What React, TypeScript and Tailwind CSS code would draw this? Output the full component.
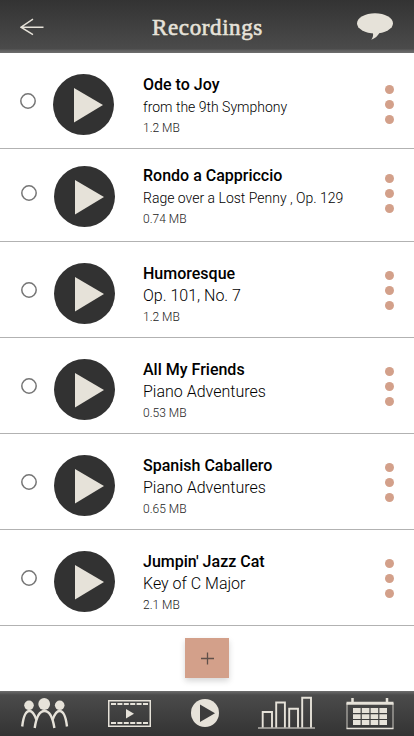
import type { ReactNode } from 'react'

interface Recording {
  title: string
  subtitle: string
  size: string
  compact?: boolean
  smallSubtitle?: boolean
  first?: boolean
}

const RECORDINGS: Recording[] = [
  { title: 'Ode to Joy', subtitle: 'from the 9th Symphony', size: '1.2 MB', smallSubtitle: true, first: true },
  { title: 'Rondo a Cappriccio', subtitle: 'Rage over a Lost Penny , Op. 129', size: '0.74 MB', smallSubtitle: true, compact: true },
  { title: 'Humoresque', subtitle: 'Op. 101, No. 7', size: '1.2 MB' },
  { title: 'All My Friends', subtitle: 'Piano Adventures', size: '0.53 MB' },
  { title: 'Spanish Caballero', subtitle: 'Piano Adventures', size: '0.65 MB' },
  { title: "Jumpin' Jazz Cat", subtitle: 'Key of C Major', size: '2.1 MB' },
]

function Header() {
  return (
    <header className="flex h-[53px] shrink-0 items-center justify-between bg-[linear-gradient(to_bottom,#333_0,#4b4b4b_49px,#5c5c5c_50px,#6e6e6e_53px)] pl-5 pr-[21px]">
      <button aria-label="Back" className="w-9">
        <svg width="24" height="18" viewBox="0 0 24 18" fill="none" stroke="#e6e2d9" strokeWidth="1.4">
          <path d="M13 1.2 1 9.2l12 7.4M1 9.2h22.5" />
        </svg>
      </button>
      <h1 className="pl-0.5 pt-px font-['Liberation_Serif',serif] text-[23px] leading-none tracking-[0.6px] text-[#e6e2d9] [-webkit-text-stroke:0.6px_#e6e2d9]">
        Recordings
      </h1>
      <button aria-label="Messages" className="w-9">
        <svg width="36" height="28" viewBox="0 0 36 28" fill="#e6e2d9">
          <ellipse cx="18" cy="10.300" rx="18" ry="10.100" />
          <path d="M15.800 19c.7 3 .2 5.500-1.500 7.800 3.600-1.300 6.700-4 8.400-7.300z" />
        </svg>
      </button>
    </header>
  )
}

function RecordingRow({ title, subtitle, size, compact, smallSubtitle, first }: Recording) {
  return (
    <li className={`flex items-start border-b border-[#b2b2b2] ${compact ? 'h-[93px] pt-[17px]' : 'h-24 pt-[21px]'} ${first ? 'pl-5' : 'pl-[21px]'}`}>
      <button aria-label={`Select ${title}`} className="mt-[19px] size-4">
        <svg width="16" height="16" viewBox="0 0 16 16" fill="none" stroke="#757575" strokeWidth="1.500">
          <circle cx="8" cy="8" r="7.200" />
        </svg>
      </button>
      <button aria-label={`Play ${title}`} className="ml-[17px] size-[61px]">
        <svg width="61" height="61" viewBox="0 0 61 61">
          <circle cx="30.500" cy="30.500" r="30.500" fill="#323232" />
          <path d="M21 14v34.500L50 31z" fill="#e6e2d9" />
        </svg>
      </button>
      <div className={`font-[Roboto,sans-serif] text-black ${compact ? '-mt-px' : 'mt-0'} ${first ? 'ml-[29px]' : 'ml-7'}`}>
        <p className="text-base font-medium leading-[22px]">{title}</p>
        <p className={`font-light leading-[22px] ${smallSubtitle ? 'text-sm' : 'text-base'}`}>{subtitle}</p>
        <p className="text-xs font-light leading-5 text-[#222]">{size}</p>
      </div>
      <button aria-label={`Options for ${title}`} className={`ml-auto mr-5 flex flex-col gap-1.5 ${first ? 'mt-[11px]' : 'mt-2'}`}>
        <span className="size-[9px] rounded-full bg-[#d3a08a]" />
        <span className="size-[9px] rounded-full bg-[#d3a08a]" />
        <span className="size-[9px] rounded-full bg-[#d3a08a]" />
      </button>
    </li>
  )
}

function PeopleIcon() {
  return (
    <svg width="48" height="31" viewBox="0 0 48 31" fill="none" stroke="#e6e2d9" strokeWidth="2.400">
      <g fill="#e6e2d9" stroke="none">
        <circle cx="8" cy="7.300" r="4.800" />
        <circle cx="23.200" cy="6" r="5.900" />
        <circle cx="38.700" cy="7.300" r="4.800" />
      </g>
      <path d="M1.200 28.500C2.200 20 4.500 13 8.500 13c3 0 5 3.500 6.800 8.500M46 28.500C45 20 42.500 13 38.500 13c-3 0-5 3.500-6.800 8.500" />
      <path d="M13.700 30C15 21 18 13 23.500 13S32 21 33.400 30" />
    </svg>
  )
}

function FilmIcon() {
  return (
    <svg width="43" height="27" viewBox="0 0 43 27" fill="none" stroke="#e6e2d9">
      <rect x=".75" y=".75" width="41.500" height="25.500" strokeWidth="1.500" />
      <path d="M3 4h37M3 23h37" strokeWidth="2" strokeDasharray="5 1.400" />
      <path d="M18 9v9.500l8-4.700z" fill="#e6e2d9" stroke="none" />
    </svg>
  )
}

function PlayIcon() {
  return (
    <svg width="28" height="28" viewBox="0 0 28 28">
      <circle cx="14" cy="14" r="14" fill="#e6e2d9" />
      <path d="M9 5.500v17.500l15-8.700z" fill="#3c3c3c" />
    </svg>
  )
}

function ChartIcon() {
  return (
    <svg width="57" height="33" viewBox="0 0 57 33" fill="none" stroke="#e6e2d9" strokeWidth="1.900">
      <path d="M4.700 32V16H14v16M18.200 32V6.500h8.700V32M31.200 32V12.800H40V32M44.200 32V1.700H53V32" />
      <path d="M0 32h57" strokeWidth="1.400" stroke="#b5b2ac" />
    </svg>
  )
}

function CalendarIcon() {
  return (
    <svg width="48" height="32" viewBox="0 0 48 32" fill="none" stroke="#e6e2d9">
      <path d="M1 5v25.500M47 5v25.500" strokeWidth="1.200" stroke="#b5b2ac" />
      <path d="M.5 30.500h47" strokeWidth="1.300" />
      <path d="M.5 5.300h47" strokeWidth="3" />
      <path d="M6.500 0v5M41 0v5" strokeWidth="2.500" />
      <path d="M7 12.500h34M7 18.600h34M7 24.500h34" strokeWidth="4.800" strokeDasharray="7.600 1.200" />
    </svg>
  )
}

function NavButton({ label, className, children }: { label: string; className: string; children: ReactNode }) {
  return (
    <button aria-label={label} className={className}>
      {children}
    </button>
  )
}

export default function App() {
  return (
    <div className="flex h-[736px] w-[414px] flex-col overflow-hidden bg-white">
      <Header />
      <ul className="shrink-0">
        {RECORDINGS.map((recording) => (
          <RecordingRow key={recording.title} {...recording} />
        ))}
      </ul>
      <div className="flex flex-1 items-start justify-center pt-3">
        <button aria-label="Add recording" className="flex h-10 w-11 items-center justify-center bg-[#d3a08a] shadow-[0_3px_6px_rgba(0,0,0,0.16)]">
          <svg width="13" height="13" viewBox="0 0 13 13" stroke="#60504a" strokeWidth="1.300">
            <path d="M6.500.5v12M0 6.500h13" />
          </svg>
        </button>
      </div>
      <nav className="flex h-[45px] shrink-0 items-start bg-[linear-gradient(to_bottom,#6e6e6e_0,#5c5c5c_2px,#4b4b4b_4px,#333_45px)] pl-[21px]">
        <NavButton label="Students" className="mt-[7px]"><PeopleIcon /></NavButton>
        <NavButton label="Videos" className="ml-[39px] mt-[9px]"><FilmIcon /></NavButton>
        <NavButton label="Recordings" className="ml-10 mt-2"><PlayIcon /></NavButton>
        <NavButton label="Progress" className="ml-[39px] mt-[5px]"><ChartIcon /></NavButton>
        <NavButton label="Calendar" className="ml-[31px] mt-[7px]"><CalendarIcon /></NavButton>
      </nav>
    </div>
  )
}
